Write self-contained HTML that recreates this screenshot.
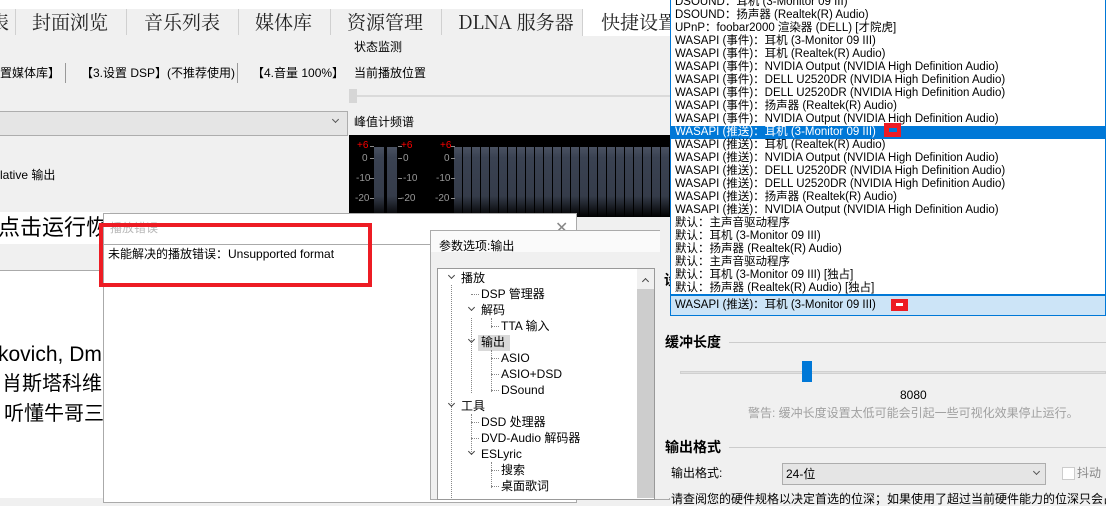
<!DOCTYPE html>
<html><head><meta charset="utf-8"><style>
*{margin:0;padding:0;box-sizing:border-box}
body{width:1106px;height:498px;overflow:hidden;position:relative;background:#f0f0f0;font-family:"Liberation Sans","Noto Sans CJK SC",sans-serif;font-size:12px;color:#000}
.a{position:absolute;white-space:nowrap}
.tab{position:absolute;top:9px;height:26px;font-family:"Noto Serif CJK SC","Liberation Serif",serif;font-size:19px;line-height:26px;color:#222}
.sep{position:absolute;top:9px;width:1px;height:26px;background:#d0d0d0}
.li{position:absolute;left:0;right:0;height:13px;line-height:13px;padding-left:4px;font-size:11.5px;color:#000}
.tr{position:absolute;font-size:12px;line-height:16px}
.chev{position:absolute;width:5px;height:5px;border-right:1.3px solid #444;border-bottom:1.3px solid #444;transform:rotate(45deg)}
.dv{position:absolute;width:0;border-left:1px dotted #888}
.dh{position:absolute;height:0;border-top:1px dotted #888}
.tk{position:absolute;width:4px;height:1px;background:#888}
</style></head><body>
<div class="a" style="left:0;top:0;width:1106px;height:9px;background:#fff"></div>
<div class="a" style="left:0;top:9px;width:670px;height:26px;background:#f0f0f0"></div>
<div class="tab" style="left:-10px">表</div>
<div class="sep" style="left:15px"></div>
<div class="tab" style="left:32px">封面浏览</div>
<div class="sep" style="left:126px"></div>
<div class="tab" style="left:144px">音乐列表</div>
<div class="sep" style="left:238px"></div>
<div class="tab" style="left:255px">媒体库</div>
<div class="sep" style="left:330px"></div>
<div class="tab" style="left:347px">资源管理</div>
<div class="sep" style="left:441px"></div>
<div class="tab" style="left:458px">DLNA 服务器</div>
<div class="a" style="left:582px;top:9px;width:90px;height:27px;background:#fff;border-left:1px solid #d0d0d0"></div>
<div class="tab" style="left:601px">快捷设置</div>

<div class="a" style="left:0;top:66px;line-height:14px">置媒体库】</div>
<div class="a" style="left:65px;top:63px;width:1px;height:20px;background:#999"></div>
<div class="a" style="left:81px;top:66px;line-height:14px">【3.设置 DSP】(不推荐使用)</div>
<div class="a" style="left:237px;top:63px;width:1px;height:20px;background:#999"></div>
<div class="a" style="left:252px;top:66px;line-height:14px">【4.音量 100%】</div>
<div class="a" style="left:354px;top:40px;line-height:14px">状态监测</div>
<div class="a" style="left:354px;top:66px;line-height:14px">当前播放位置</div>
<div class="a" style="left:350px;top:95px;width:320px;height:2px;background:#dadada"></div>
<div class="a" style="left:349px;top:89px;width:8px;height:14px;background:#d6d6d6"></div>
<div class="a" style="left:0;top:111px;width:348px;height:25px;background:#e5e5e5;border:1px solid #adadad;border-left:none"></div>
<div class="chev" style="left:333px;top:117px;border-color:#555"></div>
<div class="a" style="left:354px;top:115px;line-height:14px">峰值计频谱</div>

<div class="a" style="left:349px;top:135px;width:321px;height:82px;background:#000"></div>
<div class="a" style="left:374px;top:147px;width:10px;height:70px;background:linear-gradient(#4a5262,#3a4252 15%,#353c4a 70%,#000 100%)"></div>
<div class="a" style="left:387px;top:147px;width:10px;height:70px;background:linear-gradient(#4a5262,#3a4252 15%,#353c4a 70%,#000 100%)"></div>
<div class="a" style="left:454px;top:147px;width:216px;height:70px;background:repeating-linear-gradient(90deg,transparent 0 8px,#000 8px 9px),linear-gradient(#4a5262,#3a4252 15%,#353c4a 70%,#000 100%)"></div>
<div class="a" style="left:357px;top:140px;font-size:10px;color:#f00">+6</div>
<div class="a" style="left:401px;top:140px;font-size:10px;color:#f00">+6</div>
<div class="a" style="left:440px;top:140px;font-size:10px;color:#f00">+6</div>
<div class="a" style="left:362px;top:153px;font-size:10px;color:#999">0</div>
<div class="a" style="left:403px;top:153px;font-size:10px;color:#999">0</div>
<div class="a" style="left:444px;top:153px;font-size:10px;color:#999">0</div>
<div class="a" style="left:356px;top:173px;font-size:10px;color:#999">-10</div>
<div class="a" style="left:403px;top:173px;font-size:10px;color:#999">-10</div>
<div class="a" style="left:436px;top:173px;font-size:10px;color:#999">-10</div>
<div class="a" style="left:355px;top:193px;font-size:10px;color:#999">-20</div>
<div class="a" style="left:401px;top:193px;font-size:10px;color:#999">-20</div>
<div class="a" style="left:435px;top:193px;font-size:10px;color:#999">-20</div>
<div class="tk" style="left:370px;top:146px"></div><div class="tk" style="left:370px;top:158px"></div><div class="tk" style="left:370px;top:178px"></div><div class="tk" style="left:370px;top:198px"></div>
<div class="tk" style="left:398px;top:146px"></div><div class="tk" style="left:398px;top:158px"></div><div class="tk" style="left:398px;top:178px"></div><div class="tk" style="left:398px;top:198px"></div>
<div class="tk" style="left:451px;top:146px"></div><div class="tk" style="left:451px;top:158px"></div><div class="tk" style="left:451px;top:178px"></div><div class="tk" style="left:451px;top:198px"></div>

<div class="a" style="left:0;top:168px;line-height:14px">lative 输出</div>
<div class="a" style="left:0;top:212px;width:110px;height:32px;background:#fff"></div>
<div class="a" style="left:-2px;top:213px;font-size:22px;line-height:30px">点击运行恢</div>
<div class="a" style="left:0;top:270px;width:110px;height:228px;background:#fff;border-top:1px solid #aaa"></div>
<div class="a" style="left:-2px;top:341px;font-size:21px;line-height:28px">kovich, Dm</div>
<div class="a" style="left:2px;top:371px;font-size:20px;line-height:26px">肖斯塔科维</div>
<div class="a" style="left:4px;top:401px;font-size:20px;line-height:26px">听懂牛哥三</div>

<div class="a" style="left:103px;top:213px;width:474px;height:290px;background:#fff;border:1px solid #aaa"></div>
<div class="a" style="left:110px;top:221px;color:#b8b8b8;line-height:14px">播放错误</div>
<div class="a" style="left:555px;top:218px;font-size:16px;color:#888">✕</div>
<div class="a" style="left:103px;top:244px;width:330px;height:1px;background:#aaa"></div>
<div class="a" style="left:108px;top:247px;line-height:14px">未能解决的播放错误：Unsupported format</div>
<div class="a" style="left:99px;top:223px;width:273px;height:64px;border:4px solid #ed1c24"></div>

<div class="a" style="left:430px;top:230px;width:240px;height:270px;background:#f0f0f0;border:1px solid #aaa"></div>
<div class="a" style="left:431px;top:231px;width:239px;height:21px;background:#fafafa"></div>
<div class="a" style="left:439px;top:239px;line-height:14px">参数选项:输出</div>
<div class="a" style="left:437px;top:268px;width:218px;height:232px;background:#fff;border:1px solid #999"></div>
<div class="a" style="left:637px;top:269px;width:17px;height:229px;background:#cdcdcd"></div>
<div class="a" style="left:637px;top:269px;width:17px;height:20px;background:#f0f0f0"></div>
<div class="chev" style="left:643px;top:279px;transform:rotate(225deg)"></div>
<div class="a" style="left:478px;top:335px;width:32px;height:16px;background:#d9d9d9"></div>
<div class="dv" style="left:451px;top:285px;height:213px"></div>
<div class="dv" style="left:471px;top:318px;height:75px"></div>
<div class="dv" style="left:491px;top:318px;height:10px"></div>
<div class="dv" style="left:491px;top:350px;height:42px"></div>
<div class="dv" style="left:471px;top:414px;height:40px"></div>
<div class="dv" style="left:491px;top:462px;height:26px"></div>
<div class="dh" style="left:471px;top:294px;width:8px"></div>
<div class="dh" style="left:491px;top:326px;width:8px"></div>
<div class="dh" style="left:491px;top:358px;width:8px"></div>
<div class="dh" style="left:491px;top:374px;width:8px"></div>
<div class="dh" style="left:491px;top:390px;width:8px"></div>
<div class="dh" style="left:471px;top:422px;width:8px"></div>
<div class="dh" style="left:471px;top:438px;width:8px"></div>
<div class="dh" style="left:491px;top:470px;width:8px"></div>
<div class="dh" style="left:491px;top:486px;width:8px"></div>
<div class="chev" style="left:449px;top:273px"></div>
<div class="chev" style="left:469px;top:305px"></div>
<div class="chev" style="left:469px;top:337px"></div>
<div class="chev" style="left:449px;top:401px"></div>
<div class="chev" style="left:469px;top:449px"></div>
<div class="tr" style="left:461px;top:270px">播放</div>
<div class="tr" style="left:481px;top:286px">DSP 管理器</div>
<div class="tr" style="left:481px;top:302px">解码</div>
<div class="tr" style="left:501px;top:318px">TTA 输入</div>
<div class="tr" style="left:481px;top:334px">输出</div>
<div class="tr" style="left:501px;top:350px">ASIO</div>
<div class="tr" style="left:501px;top:366px">ASIO+DSD</div>
<div class="tr" style="left:501px;top:382px">DSound</div>
<div class="tr" style="left:461px;top:398px">工具</div>
<div class="tr" style="left:481px;top:414px">DSD 处理器</div>
<div class="tr" style="left:481px;top:430px">DVD-Audio 解码器</div>
<div class="tr" style="left:481px;top:446px">ESLyric</div>
<div class="tr" style="left:501px;top:462px">搜索</div>
<div class="tr" style="left:501px;top:478px">桌面歌词</div>

<div class="a" style="left:660px;top:230px;width:446px;height:268px;background:#f0f0f0"></div>
<div class="a" style="left:664px;top:270px;font-size:14px;font-weight:bold">设</div>
<div class="a" style="left:665px;top:334px;font-size:14px;font-weight:bold;line-height:16px">缓冲长度</div>
<div class="a" style="left:729px;top:342px;width:377px;height:1px;background:#ccc"></div>
<div class="a" style="left:680px;top:371px;width:426px;height:3px;background:#e0e0e0;border:1px solid #d0d0d0"></div>
<div class="a" style="left:802px;top:361px;width:10px;height:21px;background:#0078d7"></div>
<div class="a" style="left:900px;top:388px;line-height:14px">8080</div>
<div class="a" style="left:748px;top:406px;color:#a0a0a0;line-height:14px">警告: 缓冲长度设置太低可能会引起一些可视化效果停止运行。</div>
<div class="a" style="left:665px;top:439px;font-size:14px;font-weight:bold;line-height:16px">输出格式</div>
<div class="a" style="left:729px;top:447px;width:377px;height:1px;background:#ccc"></div>
<div class="a" style="left:671px;top:466px;line-height:14px">输出格式:</div>
<div class="a" style="left:782px;top:463px;width:264px;height:22px;background:#e5e5e5;border:1px solid #adadad"></div>
<div class="a" style="left:786px;top:467px;line-height:14px">24-位</div>
<div class="chev" style="left:1034px;top:469px;border-color:#555"></div>
<div class="a" style="left:1062px;top:467px;width:13px;height:13px;background:#fff;border:1px solid #ccc"></div>
<div class="a" style="left:1077px;top:466px;color:#888;line-height:14px">抖动</div>
<div class="a" style="left:671px;top:492px;line-height:14px">请查阅您的硬件规格以决定首选的位深；如果使用了超过当前硬件能力的位深只会占用</div>

<div class="a" style="left:670px;top:-2px;width:436px;height:297px;background:#fff;border:1px solid #0078d7;overflow:hidden">
<div class="li" style="top:-3px">DSOUND：耳机 (3-Monitor 09 III)</div>
<div class="li" style="top:10px">DSOUND：扬声器 (Realtek(R) Audio)</div>
<div class="li" style="top:23px">UPnP：foobar2000 渲染器 (DELL) [才院虎]</div>
<div class="li" style="top:36px">WASAPI (事件)：耳机 (3-Monitor 09 III)</div>
<div class="li" style="top:49px">WASAPI (事件)：耳机 (Realtek(R) Audio)</div>
<div class="li" style="top:62px">WASAPI (事件)：NVIDIA Output (NVIDIA High Definition Audio)</div>
<div class="li" style="top:75px">WASAPI (事件)：DELL U2520DR (NVIDIA High Definition Audio)</div>
<div class="li" style="top:88px">WASAPI (事件)：DELL U2520DR (NVIDIA High Definition Audio)</div>
<div class="li" style="top:101px">WASAPI (事件)：扬声器 (Realtek(R) Audio)</div>
<div class="li" style="top:114px">WASAPI (事件)：NVIDIA Output (NVIDIA High Definition Audio)</div>
<div class="li" style="top:127px;background:#0078d7;color:#fff">WASAPI (推送)：耳机 (3-Monitor 09 III)</div>
<div class="li" style="top:140px">WASAPI (推送)：耳机 (Realtek(R) Audio)</div>
<div class="li" style="top:153px">WASAPI (推送)：NVIDIA Output (NVIDIA High Definition Audio)</div>
<div class="li" style="top:166px">WASAPI (推送)：DELL U2520DR (NVIDIA High Definition Audio)</div>
<div class="li" style="top:179px">WASAPI (推送)：DELL U2520DR (NVIDIA High Definition Audio)</div>
<div class="li" style="top:192px">WASAPI (推送)：扬声器 (Realtek(R) Audio)</div>
<div class="li" style="top:205px">WASAPI (推送)：NVIDIA Output (NVIDIA High Definition Audio)</div>
<div class="li" style="top:218px">默认：主声音驱动程序</div>
<div class="li" style="top:231px">默认：耳机 (3-Monitor 09 III)</div>
<div class="li" style="top:244px">默认：扬声器 (Realtek(R) Audio)</div>
<div class="li" style="top:257px">默认：主声音驱动程序</div>
<div class="li" style="top:270px">默认：耳机 (3-Monitor 09 III) [独占]</div>
<div class="li" style="top:283px">默认：扬声器 (Realtek(R) Audio) [独占]</div>
</div>
<div class="a" style="left:884px;top:123px;width:17px;height:14px;background:#ed1c24"></div>
<div class="a" style="left:889px;top:128px;width:8px;height:4px;background:#0078d7"></div>
<div class="a" style="left:670px;top:295px;width:436px;height:21px;background:#cce4f7;border:1px solid #0078d7"></div>
<div class="a" style="left:675px;top:298px;font-size:11.5px;line-height:14px">WASAPI (推送)：耳机 (3-Monitor 09 III)</div>
<div class="a" style="left:891px;top:299px;width:17px;height:12px;background:#ed1c24"></div>
<div class="a" style="left:896px;top:303px;width:7px;height:3px;background:#fff"></div>
</body></html>
